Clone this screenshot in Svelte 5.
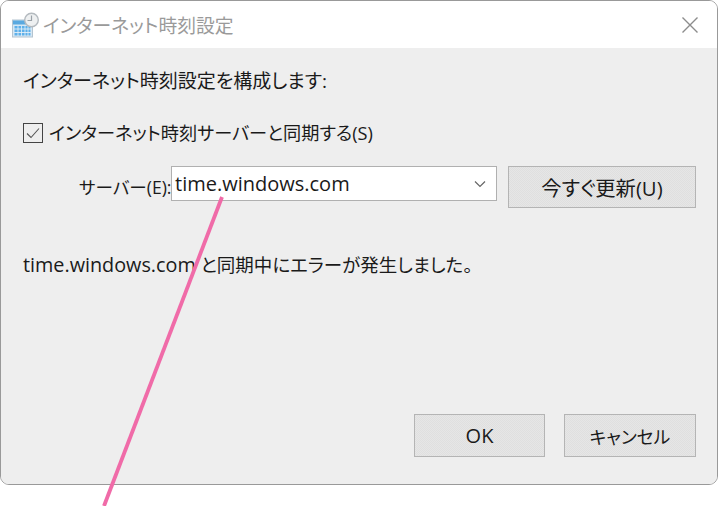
<script>
  const serverName = 'time.windows.com';
</script>

<div class="page">
  <div class="dialog">
    <header class="titlebar">
      <svg class="app-icon" width="28" height="28" viewBox="0 0 28 28">
        <rect x="1.5" y="9" width="20" height="17" fill="#d6e8f5" stroke="#b4c4d0" />
        <rect x="2" y="9.5" width="19" height="4" fill="#5aa9e0" />
        <g fill="#5eb0ea">
          <rect x="3.5" y="15" width="16" height="2.5" />
          <rect x="3.5" y="18.5" width="16" height="2.5" />
          <rect x="3.5" y="22" width="16" height="2.5" />
        </g>
        <g stroke="#e6f1f9" stroke-width="0.8">
          <path d="M7 15v10M10.5 15v10M14 15v10M17 15v10" />
        </g>
        <circle cx="20.5" cy="9" r="6.8" fill="#eef0f1" stroke="#b4babf" stroke-width="1.4" />
        <path d="M20.5 4.5V9.5H16.5" fill="none" stroke="#9aa2a8" stroke-width="1.2" />
      </svg>
      <span class="title">インターネット時刻設定</span>
      <svg class="close" width="18" height="18" viewBox="0 0 18 18">
        <path d="M1.5 1.5L16.5 16.5M16.5 1.5L1.5 16.5" stroke="#8c8c8c" stroke-width="1.4" fill="none" />
      </svg>
    </header>

    <main class="content">
      <p class="intro">インターネット時刻設定を構成します:</p>

      <label class="sync">
        <span class="checkbox">
          <svg width="20" height="20" viewBox="0 0 20 20">
            <path d="M4 10.5L8 14.5L16 5.5" fill="none" stroke="#555" stroke-width="1.1" />
          </svg>
        </span>
        インターネット時刻サーバーと同期する(S)
      </label>

      <div class="server-row">
        <span class="server-label">サーバー(E):</span>
        <div class="combo">
          <span>{serverName}</span>
          <svg width="12" height="8" viewBox="0 0 12 8">
            <path d="M1 1.5L6 6.5L11 1.5" fill="none" stroke="#666" stroke-width="1.2" />
          </svg>
        </div>
        <button class="btn update">今すぐ更新(U)</button>
      </div>

      <p class="status"><span class="host">{serverName}</span> と同期中にエラーが発生しました。</p>

      <div class="actions">
        <button class="btn action ok">OK</button>
        <button class="btn action cancel">キャンセル</button>
      </div>
    </main>
  </div>

  <svg class="pointer" width="719" height="506" viewBox="0 0 719 506">
    <line x1="222" y1="197" x2="104" y2="506" stroke="#f06ba8" stroke-width="3.8" />
  </svg>
</div>

<style>
  :global(body) {
    margin: 0;
    background: #fff;
  }

  .page {
    position: relative;
    width: 719px;
    height: 506px;
    overflow: hidden;
    font-family: "Open Sans", "Noto Sans CJK JP", sans-serif;
    font-size: 19px;
    font-feature-settings: "palt";
    color: #1a1a1a;
  }

  .dialog {
    box-sizing: border-box;
    display: flex;
    flex-direction: column;
    width: 718px;
    height: 485px;
    border: 1.5px solid #999;
    border-radius: 9px;
    overflow: hidden;
  }

  .titlebar {
    display: flex;
    align-items: center;
    flex: none;
    height: 47px;
    padding: 0 18px 0 10px;
    background: #fff;
  }

  .title {
    margin-left: 4px;
    font-size: 18.8px;
    color: #9a9a9a;
  }

  .close {
    margin-left: auto;
  }

  .content {
    flex: 1;
    display: flex;
    flex-direction: column;
    padding: 0 21px 0 22px;
    background: #eee;
  }

  .intro {
    margin: 20px 0 0;
    line-height: 26px;
  }

  .sync {
    display: flex;
    align-items: center;
    gap: 6px;
    margin-top: 26px;
    font-size: 18.2px;
    line-height: 26px;
  }

  .checkbox {
    box-sizing: border-box;
    display: flex;
    width: 20px;
    height: 20px;
    border: 1.5px solid #444;
  }

  .checkbox svg {
    margin: -1.5px;
  }

  .server-row {
    display: flex;
    align-items: flex-start;
    margin-top: 20px;
  }

  .server-label {
    margin: 8px 0 0 56px;
    width: 92px;
    flex: none;
    font-size: 17.6px;
    line-height: 26px;
    white-space: nowrap;
  }

  .combo {
    box-sizing: border-box;
    display: flex;
    align-items: center;
    justify-content: space-between;
    width: 326px;
    height: 35px;
    margin-right: 11px;
    padding: 0 10px 0 3px;
    background: #fff;
    border: 1.5px solid #b0b0b0;
    font-size: 20px;
  }

  .btn {
    box-sizing: border-box;
    padding: 0;
    font: inherit;
    font-feature-settings: inherit;
    color: inherit;
    background: repeating-conic-gradient(#e6e6e6 0 25%, #dfdfdf 0 50%) 0 0 / 2px 2px;
    border: 1.5px solid #b4b4b4;
  }

  .update {
    width: 188px;
    height: 42px;
    font-size: 20.3px;
  }

  .status {
    margin: 44px 0 0;
    font-size: 18.5px;
    line-height: 26px;
  }

  .host {
    font-size: 19.8px;
  }

  .actions {
    display: flex;
    justify-content: flex-end;
    gap: 19px;
    margin-top: auto;
    padding-bottom: 27px;
  }

  .action {
    height: 43px;
  }

  .ok {
    width: 131px;
    font-size: 20px;
  }

  .cancel {
    width: 132px;
    font-size: 17.8px;
  }

  .pointer {
    position: absolute;
    inset: 0;
    pointer-events: none;
  }
</style>
